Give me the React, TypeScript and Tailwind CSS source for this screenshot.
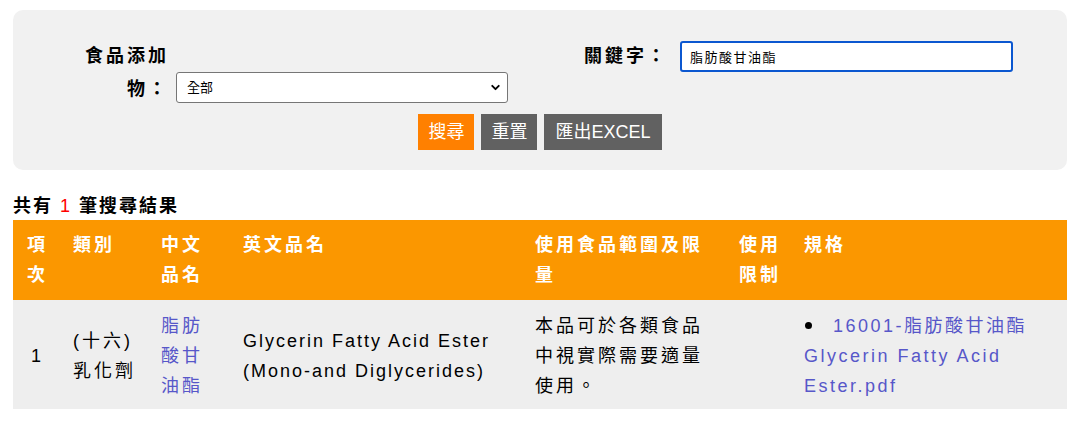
import { ChevronDown } from "lucide-react";

const font = "font-['Liberation_Sans','Noto_Sans_CJK_TC',sans-serif]";

const headers = [
  { label: "項次", w: "w-[46px]" },
  { label: "類別", w: "w-[88px]" },
  { label: "中文品名", w: "w-[82px]" },
  { label: "英文品名", w: "w-[292px]" },
  { label: "使用食品範圍及限量", w: "w-[204px]" },
  { label: "使用限制", w: "w-[65px]" },
  { label: "規格", w: "w-[277px]" },
];

const linkColor = "text-[#5757c9]";
const cell = "pl-[14px] pr-[8px] pt-[11px] pb-[8px]";

export default function App() {
  return (
    <div className={`${font} min-h-[422px] bg-white px-[13px] pt-[10px] text-black tracking-[2px]`}>
      {/* Search panel */}
      <div className="w-[1054px] rounded-[10px] bg-[#f1f1f1] pt-[30px] pb-[20px]">
        <div className="flex items-start pl-[62px]">
          <div className="flex items-end">
            <label className="w-[94px] text-right text-[18px] font-bold leading-[33px] tracking-[3px]">食品添加物：</label>
            <div className="relative mb-[3px] ml-[7px]">
              <select className="h-[31px] w-[332px] appearance-none rounded-[3px] border border-[#767676] bg-white pl-[10px] text-[13px] tracking-normal">
                <option>全部</option>
              </select>
              <ChevronDown size={13} strokeWidth={3.5} className="pointer-events-none absolute right-[6px] top-[9px]" />
            </div>
          </div>
          <div className="ml-[70px] mt-[1px] flex items-center">
            <label className="w-[90px] text-right text-[18px] font-bold leading-[31px] tracking-[3px]">關鍵字：</label>
            <input
              defaultValue="脂肪酸甘油酯"
              className="ml-[12px] h-[31px] w-[333px] rounded-[3px] border-2 border-[#0b57d0] bg-white pl-[8px] text-[13px] tracking-[1.5px] outline-none"
            />
          </div>
        </div>
        <div className="mt-[8px] flex justify-center gap-[7px] text-[18px] tracking-normal text-white">
          <button className="h-[36px] bg-[#ff8000] px-[10px]">搜尋</button>
          <button className="h-[36px] bg-[#616161] px-[10px]">重置</button>
          <button className="h-[36px] bg-[#616161] px-[11px]">匯出EXCEL</button>
        </div>
      </div>

      {/* Result count */}
      <p className="mt-[22px] text-[18px] font-bold leading-[28px]">
        共有 <span className="font-normal text-[#ff0000]">1</span> 筆搜尋結果
      </p>

      {/* Result table */}
      <table className="w-[1054px] table-fixed border-collapse text-[18px] leading-[30px] tracking-[3px]">
        <thead>
          <tr className="bg-[#fb9700] text-white">
            {headers.map((h) => (
              <th key={h.label} className={`${h.w} pl-[14px] pr-[6px] py-[10px] text-left align-top font-bold`}>
                {h.label}
              </th>
            ))}
          </tr>
        </thead>
        <tbody>
          <tr className="bg-[#eeeeee] align-middle">
            <td className={`${cell} pl-[18px]`}>1</td>
            <td className={cell}>
              (十六)
              <br />
              乳化劑
            </td>
            <td className={cell}>
              <a href="#" className={linkColor}>脂肪酸甘油酯</a>
            </td>
            <td className={`${cell} tracking-[2px]`}>Glycerin Fatty Acid Ester (Mono-and Diglycerides)</td>
            <td className={cell}>本品可於各類食品中視實際需要適量使用。</td>
            <td className={cell}></td>
            <td className={`${cell} tracking-[2.5px]`}>
              <span className="mb-[3px] ml-[1px] mr-[21px] inline-block h-[7px] w-[7px] rounded-full bg-black align-middle" />
              <a href="#" className={linkColor}>16001-脂肪酸甘油酯 Glycerin Fatty Acid Ester.pdf</a>
            </td>
          </tr>
        </tbody>
      </table>
    </div>
  );
}
